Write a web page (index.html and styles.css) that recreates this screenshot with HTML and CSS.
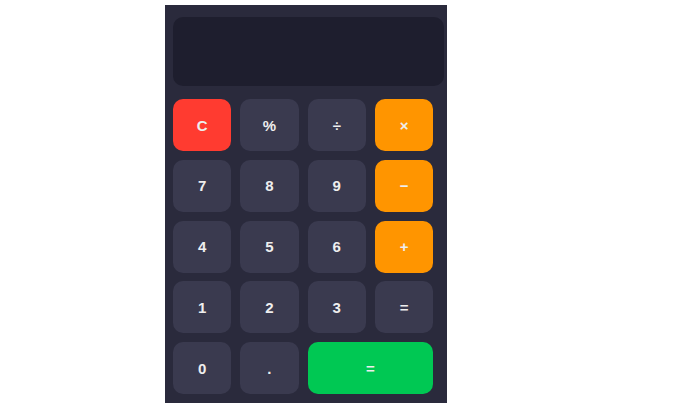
FILE: index.html
```html
<!DOCTYPE html>
<html lang="en">
<head>
    <meta charset="UTF-8">
    <meta name="viewport" content="width=device-width, initial-scale=1.0">
    <title>Calculator</title>
    <link rel="stylesheet" href="styles.css">
</head>
<body>
    <div class="calculator">
        <div class="display" id="display"></div>
        <div class="keys">
            <button class="key clear">C</button>
            <button class="key">%</button>
            <button class="key">÷</button>
            <button class="key op">×</button>

            <button class="key">7</button>
            <button class="key">8</button>
            <button class="key">9</button>
            <button class="key op">−</button>

            <button class="key">4</button>
            <button class="key">5</button>
            <button class="key">6</button>
            <button class="key op">+</button>

            <button class="key">1</button>
            <button class="key">2</button>
            <button class="key">3</button>
            <button class="key">=</button>

            <button class="key">0</button>
            <button class="key">.</button>
            <button class="key equals">=</button>
        </div>
    </div>
</body>
</html>
```

FILE: styles.css
```css
body {
    margin: 0;
    background-color: #ffffff;
    font-family: "Liberation Sans", Arial, sans-serif;
}
.calculator {
    margin: 5px 0 0 165px;
    width: 282px;
    height: 398px;
    box-sizing: border-box;
    padding: 12px 0 0 8px;
    background-color: #2a2a3c;
}
.display {
    width: 271px;
    height: 69px;
    border-radius: 10px;
    background-color: #1e1e2e;
    margin-bottom: 13px;
}
.keys {
    display: grid;
    grid-template-columns: repeat(4, 58.3px);
    grid-auto-rows: 52px;
    gap: 8.75px 9px;
}
.key {
    border: none;
    border-radius: 10px;
    background-color: #3a3a4f;
    color: #eeeeee;
    font-family: inherit;
    font-size: 15px;
    font-weight: bold;
    padding: 0;
    cursor: pointer;
}
.key.clear {
    background-color: #ff3b30;
}
.key.op {
    background-color: #ff9500;
}
.key.equals {
    grid-column: span 2;
    background-color: #00c853;
}
```
